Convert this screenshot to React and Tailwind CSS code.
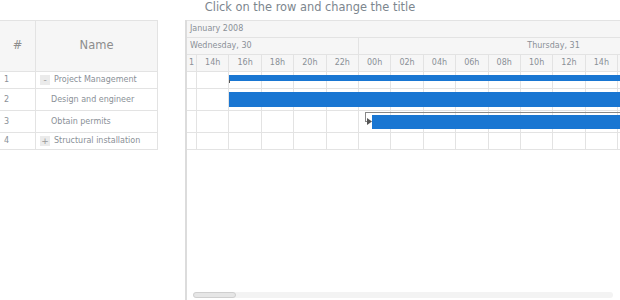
import React from "react";

const tasks = [
  { id: 1, name: "Project Management", toggle: "-", h: "h-[17px]" },
  { id: 2, name: "Design and engineer", toggle: null, h: "h-[22px]" },
  { id: 3, name: "Obtain permits", toggle: null, h: "h-[22px]" },
  { id: 4, name: "Structural installation", toggle: "+", h: "h-[17px]" },
];

const hours = ["14h", "16h", "18h", "20h", "22h", "00h", "02h", "04h", "06h", "08h", "10h", "12h", "14h", ""];

function HourCells() {
  return (
    <>
      <div className="w-[10px] shrink-0 border-r border-[#e3e3e3]" />
      {hours.map((h, i) => (
        <div key={i} className="w-[32.4px] shrink-0 border-r border-[#e3e3e3]" />
      ))}
    </>
  );
}

function DataGrid() {
  return (
    <div className="flex w-[187px] shrink-0">
      <div className="w-[158px] shrink-0">
        <div className="flex h-[52px] bg-[#f6f6f6] border-y border-[#e3e3e3] text-[11.5px] text-[#8d8d8d]">
          <div className="w-[36px] flex items-center justify-center border-r border-[#e3e3e3]">#</div>
          <div className="flex-1 flex items-center justify-center border-r border-[#e3e3e3]">Name</div>
        </div>
        {tasks.map((t) => (
          <div key={t.id} className={`flex ${t.h} border-b border-[#e3e3e3] text-[8px] text-[#8a9097]`}>
            <div className="w-[36px] flex items-center pl-[4px] border-r border-[#e3e3e3]">{t.id}</div>
            <div className="flex-1 flex items-center border-r border-[#e3e3e3] pl-[4px]">
              {t.toggle ? (
                <>
                  <span className="w-[10px] h-[10px] flex items-center justify-center bg-[#ebebeb] text-[#999] text-[9px] leading-none">{t.toggle}</span>
                  <span className="ml-[4px]">{t.name}</span>
                </>
              ) : (
                <span className="ml-[11px]">{t.name}</span>
              )}
            </div>
          </div>
        ))}
      </div>
      <div className="flex-1" />
      <div className="w-[2px] bg-[#dcdcdc] shrink-0" />
    </div>
  );
}

function Timeline() {
  return (
    <div className="flex-1 min-w-0 flex flex-col overflow-hidden">
      <div className="bg-[#f6f6f6] text-[8px] text-[#8a9097]">
        <div className="h-[18px] flex items-center pl-[3px] border-y border-[#e3e3e3] whitespace-nowrap">January 2008</div>
        <div className="h-[17px] flex border-b border-[#e3e3e3] whitespace-nowrap">
          <div className="w-[172px] shrink-0 flex items-center pl-[3px] border-r border-[#e3e3e3]">Wednesday, 30</div>
          <div className="w-[389px] shrink-0 flex items-center justify-center">Thursday, 31</div>
        </div>
        <div className="h-[17px] flex border-b border-[#e3e3e3]">
          <div className="w-[10px] shrink-0 flex items-center justify-center border-r border-[#e3e3e3]">1</div>
          {hours.map((h, i) => (
            <div key={i} className="w-[32.4px] shrink-0 flex items-center justify-center border-r border-[#e3e3e3]">{h}</div>
          ))}
        </div>
      </div>
      <div className="flex-1 relative">
        <div className="relative h-[17px] flex border-b border-[#e3e3e3]">
          <HourCells />
          <div className="absolute left-[42px] right-0 top-[3px] h-[6px] bg-[#1976d2]" />
          <div className="absolute left-[42px] top-[8px] w-[1px] h-[3px] bg-[#555]" />
        </div>
        <div className="relative h-[22px] flex border-b border-[#e3e3e3]">
          <HourCells />
          <div className="absolute left-[42px] right-0 top-[3px] h-[15px] bg-[#1976d2]" />
        </div>
        <div className="relative h-[22px] flex border-b border-[#e3e3e3]">
          <HourCells />
          <div className="absolute left-[178px] right-0 top-[1px] h-[1px] bg-[#888]" />
          <div className="absolute left-[178px] top-[1px] w-[1px] h-[10px] bg-[#888]" />
          <div className="absolute left-[178px] top-[10px] w-[3px] h-[1px] bg-[#888]" />
          <svg className="absolute left-[180px] top-[7px]" width="5" height="7" viewBox="0 0 5 7">
            <path d="M0 0 L5 3.5 L0 7 Z" fill="#555" />
          </svg>
          <div className="absolute left-[185px] right-0 top-[4px] h-[14px] bg-[#1976d2]" />
        </div>
        <div className="relative h-[17px] flex border-b border-[#e3e3e3]">
          <HourCells />
        </div>
      </div>
      <div className="h-[8px] pl-[6px] pr-[7px] pb-[2px] flex">
        <div className="flex-1 h-[6px] rounded-full bg-[#f3f3f3] flex">
          <div className="w-[43px] h-[6px] rounded-full bg-[#e6e6e6] border border-[#cfcfcf]" />
        </div>
      </div>
    </div>
  );
}

export default function App() {
  return (
    <div className="w-[620px] h-[300px] bg-white overflow-hidden flex flex-col" style={{ fontFamily: '"DejaVu Sans", sans-serif' }}>
      <div className="h-[20px] shrink-0 flex items-center justify-center text-[11.4px] text-[#7c868e] pb-[5px]">
        Click on the row and change the title
      </div>
      <div className="flex-1 flex min-h-0">
        <DataGrid />
        <Timeline />
      </div>
    </div>
  );
}
